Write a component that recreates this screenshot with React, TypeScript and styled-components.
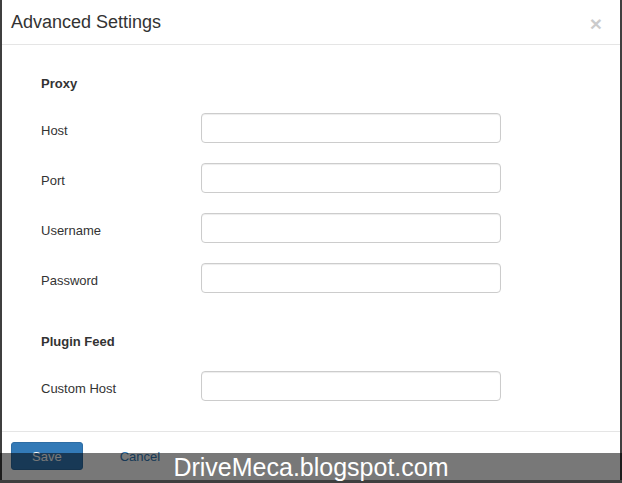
import React from 'react'
import styled, { createGlobalStyle } from 'styled-components'

const GlobalStyle = createGlobalStyle`
	html, body {
		margin: 0;
		padding: 0;
		background: #3f3f3f;
		font-family: 'Liberation Sans', Arial, Helvetica, sans-serif;
		color: #333333;
	}
`

const Page = styled.div`
	position: relative;
	width: 622px;
	height: 483px;
	overflow: hidden;
	padding-left: 2px;
	box-sizing: border-box;
`

const Modal = styled.div`
	width: 618px;
	height: 480px;
	background: #ffffff;
	display: flex;
	flex-direction: column;
`

const Header = styled.div`
	height: 45px;
	border-bottom: 1px solid #e5e5e5;
	display: flex;
	align-items: center;
	justify-content: space-between;
	padding: 0 18px 1px 9px;
	box-sizing: content-box;
`

const Title = styled.h4`
	margin: 0;
	font-size: 18px;
	font-weight: 400;
	line-height: 20px;
	color: #333333;
`

const Close = styled.button`
	border: 0;
	background: transparent;
	padding: 0;
	margin-top: 4px;
	font-family: 'Liberation Sans', Arial, sans-serif;
	font-size: 21px;
	font-weight: 700;
	line-height: 1;
	color: #000000;
	opacity: 0.2;
	cursor: pointer;
`

const Body = styled.div`
	padding: 30px 0 30px 39px;
	display: flex;
	flex-direction: column;
`

const Section = styled.h5<{ $gapTop?: number }>`
	margin: ${p => p.$gapTop ?? 0}px 0 20px;
	font-size: 13px;
	font-weight: 700;
	line-height: 18px;
	color: #333333;
`

const Fields = styled.div`
	display: flex;
	flex-direction: column;
	gap: 20px;
`

const Row = styled.div`
	display: grid;
	grid-template-columns: 160px 300px;
	align-items: center;
`

const Label = styled.label`
	font-size: 13px;
	line-height: 18px;
	color: #333333;
	padding-top: 5px;
`

const Input = styled.input`
	width: 300px;
	height: 30px;
	box-sizing: border-box;
	border: 1px solid #cccccc;
	border-radius: 4px;
	box-shadow: inset 0 1px 1px rgba(0, 0, 0, 0.075);
	padding: 5px 10px;
	font-family: inherit;
	font-size: 13px;
	outline: none;
`

const Footer = styled.div`
	border-top: 1px solid #e5e5e5;
	padding: 10px 9px;
	display: flex;
	align-items: center;
	gap: 24px;
`

const Button = styled.button<{ $link?: boolean }>`
	height: 28px;
	box-sizing: border-box;
	padding: 1px ${p => (p.$link ? 12 : 20)}px 0;
	font-family: inherit;
	font-size: 13px;
	line-height: 26px;
	border-radius: 3px;
	border: 1px solid ${p => (p.$link ? 'transparent' : '#2e6da4')};
	background: ${p => (p.$link ? 'transparent' : '#337ab7')};
	color: ${p => (p.$link ? '#337ab7' : '#ffffff')};
	cursor: pointer;
`

const Watermark = styled.div`
	position: absolute;
	left: 0;
	right: 0;
	top: 453px;
	height: 27px;
	background: rgba(0, 0, 0, 0.53);
	color: #ffffff;
	font-size: 25px;
	line-height: 29px;
	text-align: center;
	white-space: nowrap;
`

const proxyFields = ['Host', 'Port', 'Username', 'Password']

export default function App() {
	return (
		<Page>
			<GlobalStyle />
			<Modal>
				<Header>
					<Title>Advanced Settings</Title>
					<Close aria-label="Close">×</Close>
				</Header>
				<Body>
					<Section>Proxy</Section>
					<Fields>
						{proxyFields.map(name => (
							<Row key={name}>
								<Label>{name}</Label>
								<Input type={name === 'Password' ? 'password' : 'text'} />
							</Row>
						))}
					</Fields>
					<Section $gapTop={40}>Plugin Feed</Section>
					<Fields>
						<Row>
							<Label>Custom Host</Label>
							<Input type="text" />
						</Row>
					</Fields>
				</Body>
				<Footer>
					<Button>Save</Button>
					<Button $link>Cancel</Button>
				</Footer>
			</Modal>
			<Watermark>DriveMeca.blogspot.com</Watermark>
		</Page>
	)
}
